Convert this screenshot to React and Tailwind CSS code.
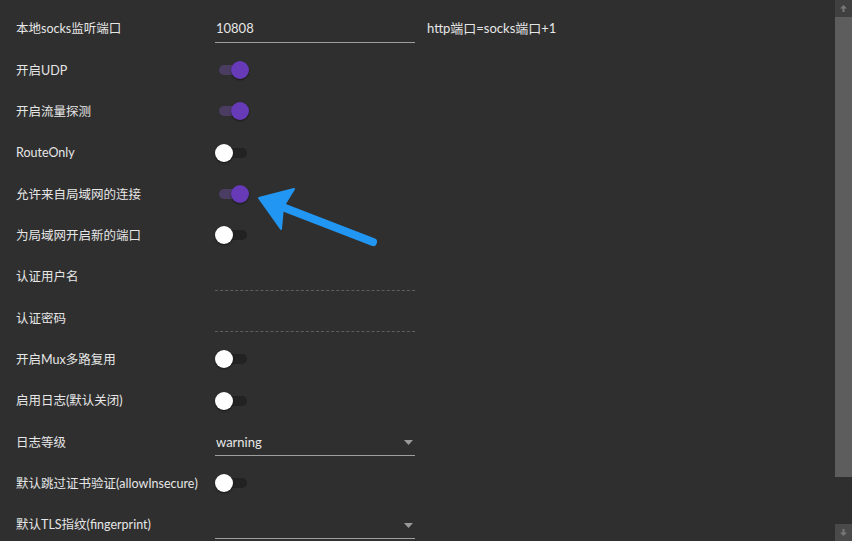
import React from 'react'

const rows = [
  { label: '本地socks监听端口', type: 'input', value: '10808', note: 'http端口=socks端口+1' },
  { label: '开启UDP', type: 'toggle', on: true },
  { label: '开启流量探测', type: 'toggle', on: true },
  { label: 'RouteOnly', type: 'toggle', on: false },
  { label: '允许来自局域网的连接', type: 'toggle', on: true },
  { label: '为局域网开启新的端口', type: 'toggle', on: false },
  { label: '认证用户名', type: 'dashed' },
  { label: '认证密码', type: 'dashed' },
  { label: '开启Mux多路复用', type: 'toggle', on: false },
  { label: '启用日志(默认关闭)', type: 'toggle', on: false },
  { label: '日志等级', type: 'select', value: 'warning' },
  { label: '默认跳过证书验证(allowInsecure)', type: 'toggle', on: false },
  { label: '默认TLS指纹(fingerprint)', type: 'select', value: '' },
]

function Toggle({ on }) {
  return (
    <div className="relative h-[18px] w-[34px] shrink-0">
      <div
        className={
          'absolute left-[4px] top-[4px] h-[10px] w-[28px] rounded-full ' +
          (on ? 'bg-[#4b3c62]' : 'bg-[#222222]')
        }
      />
      <div
        className={
          'absolute top-0 h-[18px] w-[18px] rounded-full shadow-[0_1px_2px_rgba(0,0,0,0.5)] ' +
          (on ? 'left-[16px] bg-[#673ab7]' : 'left-0 bg-white')
        }
      />
    </div>
  )
}

function Field({ row }) {
  if (row.type === 'toggle') return <Toggle on={row.on} />
  if (row.type === 'dashed') {
    return <div className="mt-[2px] h-[26px] w-[200px] shrink-0 border-b border-dashed border-[#5e5e5e]" />
  }
  if (row.type === 'select') {
    return (
      <div className="mt-[2px] flex h-[26px] w-[200px] shrink-0 items-center justify-between border-b border-[#9e9e9e] pl-[1px] pr-[2px] text-[13px]">
        <span>{row.value}</span>
        <svg width="9" height="5" viewBox="0 0 9 5">
          <path d="M0 0 L9 0 L4.5 5 Z" fill="#9a9a9a" />
        </svg>
      </div>
    )
  }
  return (
    <div className="flex shrink-0 items-center">
      <div className="mt-[2px] flex h-[26px] w-[200px] items-center border-b border-[#9e9e9e] pl-[1px] text-[13px]">
        {row.value}
      </div>
      <span className="ml-[12px] text-[13px]">{row.note}</span>
    </div>
  )
}

export default function App() {
  return (
    <div
      className="relative flex h-[541px] w-[852px] overflow-hidden bg-[#2f2f2f] text-[12.5px] text-[#e6e6e6]"
      style={{ fontFamily: 'Lato, "Noto Sans CJK SC", sans-serif' }}
    >
      <div className="flex-1 pl-4 pt-[8px]">
        {rows.map((row) => (
          <div key={row.label} className="flex h-[41.33px] items-center">
            <div className="mt-[2px] w-[199px] shrink-0 whitespace-nowrap leading-none">{row.label}</div>
            <Field row={row} />
          </div>
        ))}
      </div>

      <div className="flex w-[17px] flex-col bg-[#2f2f2f]">
        <div className="flex h-[17px] items-center justify-center bg-[#404040]">
          <svg width="9" height="9" viewBox="0 0 9 9">
            <path d="M4.5 1 L8 4.5 L5.5 4.5 L5.5 8 L3.5 8 L3.5 4.5 L1 4.5 Z" fill="#777777" />
          </svg>
        </div>
        <div className="h-[460px] bg-[#5d5d5d]" />
        <div className="flex-1" />
        <div className="flex h-[17px] items-center justify-center bg-[#4a4a4a]">
          <svg width="9" height="9" viewBox="0 0 9 9">
            <path d="M4.5 8 L8 4.5 L5.5 4.5 L5.5 1 L3.5 1 L3.5 4.5 L1 4.5 Z" fill="#777777" />
          </svg>
        </div>
      </div>

      <svg className="pointer-events-none absolute left-0 top-0" width="852" height="541">
        <line x1="373" y1="242" x2="285" y2="208" stroke="#2196f3" strokeWidth="8" strokeLinecap="round" />
        <path d="M259 198 L294 189 L283 207 L281 229 Z" fill="#2196f3" stroke="#2196f3" strokeWidth="2" strokeLinejoin="round" />
      </svg>
    </div>
  )
}
